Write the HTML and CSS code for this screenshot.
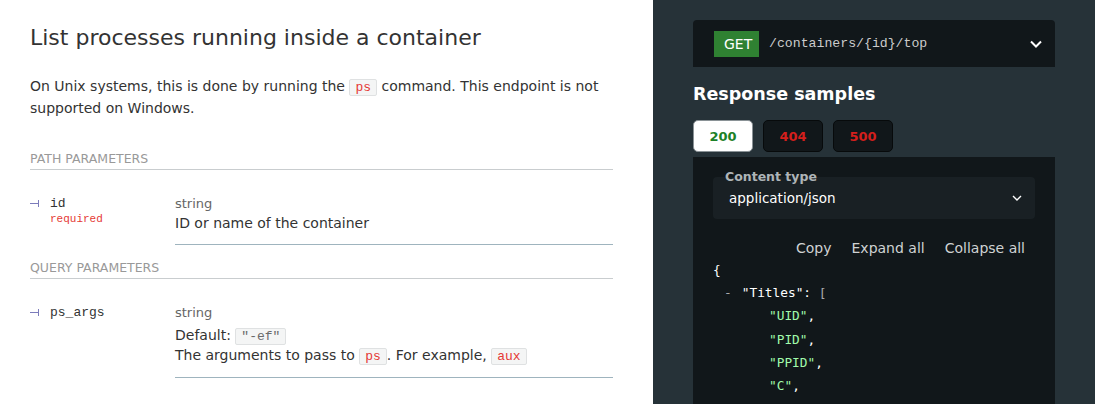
FILE: index.html
```html
<!DOCTYPE html>
<html>
<head>
<meta charset="utf-8">
<link rel="stylesheet" href="styles.css">
</head>
<body>
<div class="page">
  <div class="middle">
    <h2 class="title">List processes running inside a container</h2>
    <p class="desc">On Unix systems, this is done by running the <code class="ic">ps</code> command. This endpoint is not supported on Windows.</p>

    <h5 class="section">Path parameters</h5>
    <div class="param">
      <div class="pname">
        <div class="nameline"><span class="marker"></span><span class="name">id</span></div>
        <div class="req">required</div>
      </div>
      <div class="pdetail">
        <div class="type">string</div>
        <div class="pdesc">ID or name of the container</div>
      </div>
    </div>

    <h5 class="section">Query parameters</h5>
    <div class="param">
      <div class="pname">
        <div class="nameline"><span class="marker"></span><span class="name">ps_args</span></div>
      </div>
      <div class="pdetail">
        <div class="type">string</div>
        <div class="pdefault">Default: <code class="dv">"-ef"</code></div>
        <div class="pdesc">The arguments to pass to <code class="ic">ps</code>. For example, <code class="ic">aux</code></div>
      </div>
    </div>
  </div>

  <div class="right">
    <div class="endpoint">
      <span class="get">GET</span>
      <span class="path">/containers/{id}/top</span>
      <svg class="chev" width="14" height="10" viewBox="0 0 14 10"><path d="M2 2.5 L7 7.5 L12 2.5" fill="none" stroke="#fff" stroke-width="2"/></svg>
    </div>
    <h3 class="rs">Response samples</h3>
    <div class="tabs">
      <span class="tab active">200</span>
      <span class="tab">404</span>
      <span class="tab">500</span>
    </div>
    <div class="panel">
      <div class="ctype">
        <span class="ctlabel">Content type</span>
        <span class="ctval">application/json</span>
        <svg class="ctchev" width="12" height="8" viewBox="0 0 12 8"><path d="M2 2 L6 6 L10 2" fill="none" stroke="#fff" stroke-width="1.4"/></svg>
      </div>
      <div class="actions">
        <span>Copy</span><span>Expand all</span><span>Collapse all</span>
      </div>
      <div class="json">
        <div class="ln">{</div>
        <div class="ln l1"><span class="col">-</span><span class="key">"Titles"</span>: <span class="pn">[</span></div>
        <div class="ln l2"><span class="str">"UID"</span>,</div>
        <div class="ln l2"><span class="str">"PID"</span>,</div>
        <div class="ln l2"><span class="str">"PPID"</span>,</div>
        <div class="ln l2"><span class="str">"C"</span>,</div>
      </div>
    </div>
  </div>
</div>
</body>
</html>
```

FILE: styles.css
```css
html, body {
  margin: 0;
  padding: 0;
  height: 100%;
  overflow: hidden;
}
body {
  font-family: "DejaVu Sans", sans-serif;
  color: #333;
  background: #fff;
}
.page {
  display: flex;
  height: 404px;
}
.middle {
  width: 653px;
  box-sizing: border-box;
  padding: 0 40px 0 30px;
  flex: none;
}
.title {
  font-size: 22px;
  font-weight: 400;
  line-height: 30px;
  margin: 23px 0 0 0;
  color: #333;
}
.desc {
  font-size: 14px;
  line-height: 22px;
  margin: 22px 0 0 0;
}
code {
  font-family: "Liberation Mono", monospace;
  font-size: 13px;
  line-height: 1;
}
.ic {
  color: #e53935;
  background: rgba(38, 50, 56, 0.05);
  border: 1px solid rgba(38, 50, 56, 0.1);
  padding: 0 5px;
  border-radius: 2px;
}
.dv {
  color: #6a6a6a;
  background: rgba(38, 50, 56, 0.05);
  border: 1px solid rgba(38, 50, 56, 0.1);
  padding: 0 5px;
  border-radius: 2px;
}
.section {
  font-size: 12.5px;
  font-weight: 400;
  text-transform: uppercase;
  color: #999;
  line-height: 20px;
  margin: 30px 0 0 0;
  padding-bottom: 0;
  border-bottom: 1px solid #c9cdcf;
}
.param + .section {
  margin-top: 13px;
}
.param {
  display: grid;
  grid-template-columns: 145px 1fr;
  padding-top: 24px;
}
.nameline {
  display: flex;
  align-items: center;
  height: 18px;
}
.marker {
  display: inline-block;
  width: 8px;
  height: 7px;
  border-right: 1px solid #7c7cbb;
  background: linear-gradient(#7c7cbb, #7c7cbb) left center / 8px 1px no-repeat;
  margin-right: 11px;
}
.name {
  font-family: "Liberation Mono", monospace;
  font-size: 13px;
  color: #333;
}
.req {
  font-family: "Liberation Mono", monospace;
  font-size: 11px;
  color: #e53935;
  padding-left: 20px;
  line-height: 14px;
}
.pdetail {
  border-bottom: 1px solid #9fb4be;
  padding-bottom: 11px;
}
.param:last-child .pdetail {
  padding-bottom: 12px;
}
.type {
  font-size: 13px;
  color: #666;
  line-height: 18px;
  margin-top: 1px;
}
.pdesc, .pdefault {
  font-size: 14px;
  line-height: 20px;
}
.pdefault {
  margin-top: 3px;
}

/* right panel */
.right {
  flex: 1;
  background: #263238;
  padding: 20px 40px 0 40px;
  box-sizing: border-box;
  overflow: hidden;
}
.endpoint {
  background: #11171a;
  height: 47px;
  display: flex;
  align-items: center;
  padding: 0 12px 0 21px;
  border-radius: 4px 4px 0 0;
}
.get {
  background: #2f8132;
  color: #fff;
  font-size: 14px;
  height: 26px;
  line-height: 26px;
  padding: 0 10px;
  box-sizing: border-box;
  width: 45px;
  text-align: center;
}
.path {
  font-family: "Liberation Mono", monospace;
  font-size: 13.2px;
  color: #ccc;
  margin-left: 10px;
  flex: 1;
}
.chev { display: block; }
.rs {
  color: #fff;
  font-size: 17.5px;
  font-weight: 700;
  margin: 16px 0 0 0;
  line-height: 22px;
}
.tabs {
  display: flex;
  gap: 10px;
  margin-top: 15px;
}
.tab {
  width: 60px;
  height: 32px;
  box-sizing: border-box;
  border-radius: 5px;
  background: #11171a;
  border: 1px solid #070a0b;
  color: #d41f1c;
  font-weight: 700;
  font-size: 13px;
  display: flex;
  align-items: center;
  justify-content: center;
}
.tab.active {
  background: #fff;
  color: #1d8127;
  border-color: #8a9296;
}
.panel {
  background: #11171a;
  margin-top: 5px;
  padding: 20px 20px 0 20px;
  height: 300px;
}
.ctype {
  position: relative;
  background: #192024;
  height: 42px;
  border-radius: 4px;
  display: flex;
  align-items: center;
  padding: 0 12px 0 16px;
  margin-top: 0;
}
.ctlabel {
  position: absolute;
  left: 12px;
  top: -8px;
  font-size: 12.5px;
  font-weight: 700;
  color: #aeb4b7;
}
.ctval {
  flex: 1;
  color: #fff;
  font-size: 13.5px;
  margin-top: 0;
}
.actions {
  display: flex;
  justify-content: flex-end;
  gap: 20px;
  padding-right: 10px;
  margin-top: 19px;
  font-size: 14px;
  color: #cfd2d3;
  line-height: 21px;
}
.json {
  font-family: "DejaVu Sans Mono", monospace;
  font-size: 12.8px;
  color: #fff;
  margin-top: -1px;
}
.ln {
  line-height: 23.2px;
  white-space: pre;
}
.l1 { padding-left: 11px; }
.l2 { padding-left: 56px; }
.col { color: #aaa; margin-right: 10px; }
.pn { color: #aaa; }
.str { color: #a0fbaa; }
```
